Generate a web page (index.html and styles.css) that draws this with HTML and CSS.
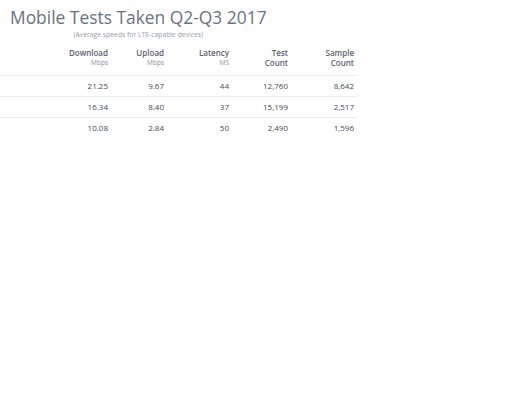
FILE: index.html
```html
<!DOCTYPE html>
<html>
<head>
<meta charset="utf-8">
<link rel="stylesheet" href="styles.css">
</head>
<body>
<div class="head">
  <h1 class="title">Mobile Tests Taken Q2-Q3 2017</h1>
  <p class="sub">(Average speeds for LTE-capable devices)</p>
</div>
<table class="stats">
  <colgroup>
    <col class="c0"><col class="c1"><col class="c2"><col class="c3"><col class="c4"><col class="c5">
  </colgroup>
  <thead>
    <tr>
      <th></th>
      <th><span class="h">Download</span><span class="unit">Mbps</span></th>
      <th><span class="h">Upload</span><span class="unit">Mbps</span></th>
      <th><span class="h">Latency</span><span class="unit">MS</span></th>
      <th><span class="h">Test</span><span class="h">Count</span></th>
      <th class="last"><span class="h">Sample</span><span class="h">Count</span></th>
    </tr>
  </thead>
  <tbody>
    <tr><td></td><td>21.25</td><td>9.67</td><td>44</td><td>12,760</td><td class="last">8,642</td></tr>
    <tr><td></td><td>16.34</td><td>8.40</td><td>37</td><td>15,199</td><td class="last">2,517</td></tr>
    <tr><td></td><td>10.08</td><td>2.84</td><td>50</td><td>2,490</td><td class="last">1,596</td></tr>
  </tbody>
</table>
</body>
</html>
```

FILE: styles.css
```css
body {
  margin: 0;
  background: #fff;
  font-family: "Open Sans", "Noto Sans", sans-serif;
}
.head {
  display: inline-flex;
  flex-direction: column;
  align-items: center;
  padding: 7px 0 0 10px;
}
.title {
  margin: 0;
  font-size: 17.4px;
  font-weight: 400;
  line-height: 20px;
  color: #6b717d;
}
.sub {
  margin: 4px 0 0;
  font-size: 6.8px;
  line-height: 8px;
  color: #9a9ea6;
}
.stats {
  border-collapse: collapse;
  table-layout: fixed;
  width: 357px;
  margin-top: 9px;
}
.c0 { width: 60px; }
.c1 { width: 48px; }
.c2 { width: 56px; }
.c3 { width: 65px; }
.c4 { width: 59px; }
.c5 { width: 69px; }
.stats th {
  text-align: right;
  vertical-align: top;
  padding: 0 0 7px;
  font-weight: 600;
  color: #5b6170;
}
.stats th .h {
  display: block;
  font-size: 8px;
  line-height: 10px;
}
.stats th .unit {
  display: block;
  font-size: 6.5px;
  line-height: 10px;
  font-weight: 400;
  color: #8a8f99;
}
.stats td {
  text-align: right;
  font-size: 8px;
  line-height: 20px;
  padding: 0;
  color: #454a52;
  border-top: 1px solid #ececec;
}
.stats .last { padding-right: 3px; }
```
